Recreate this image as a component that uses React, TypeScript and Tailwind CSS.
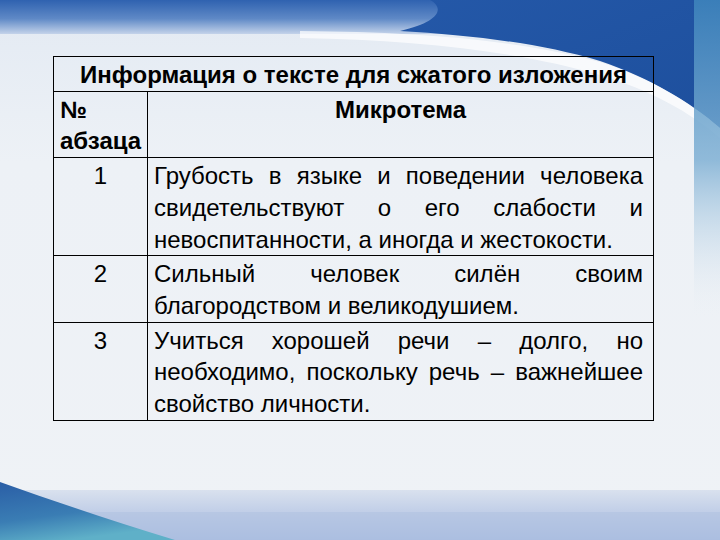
import React from "react";

const rows = [
  {
    n: "1",
    text: "Грубость в языке и поведении человека свидетельствуют о его слабости и невоспитанности, а иногда и жестокости.",
  },
  { n: "2", text: "Сильный человек силён своим благородством и великодушием." },
  {
    n: "3",
    text: "Учиться хорошей речи – долго, но необходимо, поскольку речь – важнейшее свойство личности.",
  },
];

function Backdrop() {
  return (
    <svg className="absolute inset-0" width="720" height="540" viewBox="0 0 720 540">
      <defs>
        <linearGradient id="top" x1="0" y1="0" x2="0" y2="1">
          <stop offset="0" stopColor="#2f62b0" />
          <stop offset="0.55" stopColor="#5f89c6" />
          <stop offset="1" stopColor="#c4d3ea" />
        </linearGradient>
        <linearGradient id="corner" x1="0" y1="0" x2="1" y2="1">
          <stop offset="0" stopColor="#2458a8" />
          <stop offset="1" stopColor="#1d4f9d" />
        </linearGradient>
        <linearGradient id="edge" x1="0" y1="0" x2="0" y2="1">
          <stop offset="0" stopColor="#3f86bd" />
          <stop offset="0.5" stopColor="#7fb0d4" />
          <stop offset="1" stopColor="#eef2f6" stopOpacity="0" />
        </linearGradient>
        <linearGradient id="floor" x1="0" y1="0" x2="0" y2="1">
          <stop offset="0" stopColor="#d9e1ee" />
          <stop offset="0.4" stopColor="#c3d0e8" />
          <stop offset="1" stopColor="#a9bde1" />
        </linearGradient>
        <linearGradient id="wave" x1="0" y1="0" x2="0.4" y2="1">
          <stop offset="0" stopColor="#2a5ea6" />
          <stop offset="0.6" stopColor="#3a7db4" />
          <stop offset="1" stopColor="#5fb0c8" />
        </linearGradient>
        <linearGradient id="paper" x1="0" y1="0" x2="0" y2="1">
          <stop offset="0" stopColor="#e3eaf3" />
          <stop offset="0.3" stopColor="#edf1f6" />
          <stop offset="1" stopColor="#eff2f6" />
        </linearGradient>
      </defs>
      <rect width="720" height="540" fill="url(#paper)" />
      <rect width="720" height="34" fill="url(#top)" />
      <path d="M430 0 L720 0 L720 128 C690 102 650 78 600 61 C540 43 470 35 400 31 C440 22 445 8 430 0 Z" fill="url(#corner)" />
      <path d="M300 31 C420 32 520 40 600 62 C650 78 690 102 720 128 L720 138 C690 112 650 90 600 75 C520 52 420 40 300 38 Z" fill="#ffffff" opacity="0.7" />
      <rect x="694" y="0" width="26" height="320" fill="url(#edge)" opacity="0.85" />
      <rect x="0" y="490" width="720" height="50" fill="url(#floor)" />
      <rect x="0" y="512" width="720" height="28" fill="#aebfe0" opacity="0.5" />
      <path d="M0 482 C50 500 110 520 175 540 L0 540 Z" fill="url(#wave)" />
    </svg>
  );
}

export default function App() {
  return (
    <div
      className="relative w-[720px] h-[540px] overflow-hidden bg-[#eef2f6]"
      style={{ fontFamily: '"Liberation Sans", Arial, sans-serif' }}
    >
      <Backdrop />
      <div className="relative pt-[56px] pl-[53px]">
        <table className="w-[601px] border-collapse text-[24px] leading-[31.7px] text-black">
          <thead>
            <tr>
              <th colSpan={2} className="border border-black font-bold text-center px-0 pt-[2px] pb-0">
                Информация о тексте для сжатого изложения
              </th>
            </tr>
            <tr>
              <th className="w-[94px] border border-black font-bold text-left align-top pl-[6px] pr-0 pt-[2px] pb-0">
                №
                <br />
                абзаца
              </th>
              <th className="border border-black font-bold text-center align-top px-0 pt-[2px] pb-0">Микротема</th>
            </tr>
          </thead>
          <tbody>
            {rows.map((r) => (
              <tr key={r.n}>
                <td className="border border-black text-center align-top px-0 pt-[2px] pb-0">{r.n}</td>
                <td className="border border-black text-justify align-top pl-[6px] pr-[10px] pt-[2px] pb-0">
                  {r.text}
                </td>
              </tr>
            ))}
          </tbody>
        </table>
      </div>
    </div>
  );
}
